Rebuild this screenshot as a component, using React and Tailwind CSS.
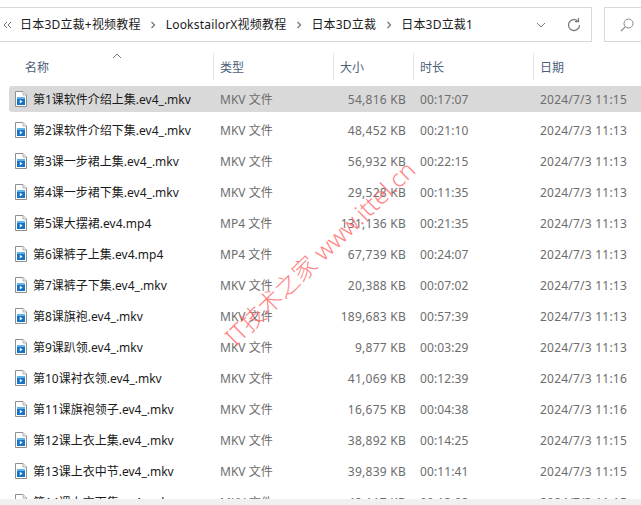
const font = { fontFamily: '"Noto Sans", "Noto Sans CJK SC", sans-serif' };

const rows = [
  ["第1课软件介绍上集.ev4_.mkv", "MKV 文件", "54,816 KB", "00:17:07", "2024/7/3 11:15"],
  ["第2课软件介绍下集.ev4_.mkv", "MKV 文件", "48,452 KB", "00:21:10", "2024/7/3 11:13"],
  ["第3课一步裙上集.ev4_.mkv", "MKV 文件", "56,932 KB", "00:22:15", "2024/7/3 11:13"],
  ["第4课一步裙下集.ev4_.mkv", "MKV 文件", "29,528 KB", "00:11:35", "2024/7/3 11:13"],
  ["第5课大摆裙.ev4.mp4", "MP4 文件", "131,136 KB", "00:21:35", "2024/7/3 11:13"],
  ["第6课裤子上集.ev4.mp4", "MP4 文件", "67,739 KB", "00:24:07", "2024/7/3 11:13"],
  ["第7课裤子下集.ev4_.mkv", "MKV 文件", "20,388 KB", "00:07:02", "2024/7/3 11:13"],
  ["第8课旗袍.ev4_.mkv", "MKV 文件", "189,683 KB", "00:57:39", "2024/7/3 11:13"],
  ["第9课趴领.ev4_.mkv", "MKV 文件", "9,877 KB", "00:03:29", "2024/7/3 11:13"],
  ["第10课衬衣领.ev4_.mkv", "MKV 文件", "41,069 KB", "00:12:39", "2024/7/3 11:16"],
  ["第11课旗袍领子.ev4_.mkv", "MKV 文件", "16,675 KB", "00:04:38", "2024/7/3 11:16"],
  ["第12课上衣上集.ev4_.mkv", "MKV 文件", "38,892 KB", "00:14:25", "2024/7/3 11:15"],
  ["第13课上衣中节.ev4_.mkv", "MKV 文件", "39,839 KB", "00:11:41", "2024/7/3 11:15"],
  ["第14课上衣下集.ev4_.mkv", "MKV 文件", "42,117 KB", "00:13:02", "2024/7/3 11:15"],
];

function Chevron() {
  return (
    <svg width="8" height="8" viewBox="0 0 8 8" className="mx-[8.5px] shrink-0">
      <path d="M2.5 1 L5.5 4 L2.5 7" fill="none" stroke="#777" strokeWidth="1.3" />
    </svg>
  );
}

function FileIcon() {
  return (
    <svg width="12" height="16" viewBox="0 0 12 16" className="shrink-0">
      <path d="M.5.5H8L11.5 4V15.5H.5Z" fill="#fff" stroke="#8f8f8f" />
      <path d="M8 .5V4H11.5" fill="#f0f0f0" stroke="#b0b0b0" />
      <rect x="2" y="6" width="8" height="8" fill="#1673c6" />
      <rect x="2" y="6" width="8" height="2" fill="#62b2ea" />
      <path d="M4.8 8.8 L7.6 10.6 L4.8 12.4Z" fill="#fff" />
    </svg>
  );
}

function Row({ r, selected }) {
  return (
    <div className={`flex h-[26px] mb-[5px] items-center text-[12px] shrink-0 ml-[9px] w-[632px] ${selected ? "bg-[#d9d9d9] rounded-l-[3px]" : ""}`}>
      <div className="w-[202px] flex items-center pl-[6px] shrink-0 text-[#1a1a1a]">
        <FileIcon />
        <span className="ml-[6px] pt-[2px] whitespace-nowrap">{r[0]}</span>
      </div>
      <div className="w-[120px] pl-[9px] pt-[2px] shrink-0 text-[#6d6d6d] whitespace-nowrap">{r[1]}</div>
      <div className="w-[75px] pt-[2px] text-right shrink-0 text-[#6d6d6d] whitespace-nowrap tracking-[0.25px]">{r[2]}</div>
      <div className="w-[120px] pl-[14px] pt-[2px] shrink-0 text-[#6d6d6d] whitespace-nowrap tracking-[0.1px]">{r[3]}</div>
      <div className="pl-[14px] pt-[2px] text-[#6d6d6d] whitespace-nowrap tracking-[0.22px]">{r[4]}</div>
    </div>
  );
}

function Head({ w, children, pl }) {
  return (
    <div className={`${w} ${pl} pt-[2px] h-[27px] flex items-center border-r border-[#e5e5e5] shrink-0 text-[12px] text-[#4c607a]`}>
      {children}
    </div>
  );
}

export default function App() {
  return (
    <div className="relative w-[641px] h-[505px] overflow-hidden bg-white flex flex-col" style={font}>
      <div className="flex pt-[7px] h-[53px] shrink-0">
        <div className="w-[592px] h-[35px] border-y border-r border-[#d9d9d9] flex items-center text-[12px] tracking-[0.2px] text-[#1a1a1a] whitespace-nowrap shrink-0">
          <svg width="9" height="8" viewBox="0 0 9 8" className="ml-[3px] mr-[8px] shrink-0">
            <path d="M4 1 L1 4 L4 7 M8 1 L5 4 L8 7" fill="none" stroke="#777" strokeWidth="1" />
          </svg>
          <span>日本3D立裁+视频教程</span>
          <Chevron />
          <span>LookstailorX视频教程</span>
          <Chevron />
          <span>日本3D立裁</span>
          <Chevron />
          <span>日本3D立裁1</span>
          <svg width="10" height="6" viewBox="0 0 10 6" className="ml-auto shrink-0">
            <path d="M1 1 L5 5 L9 1" fill="none" stroke="#777" strokeWidth="1" />
          </svg>
          <svg width="16" height="16" viewBox="0 0 16 16" className="ml-[20px] mr-[9px] shrink-0">
            <path d="M13.5 8 A5.5 5.5 0 1 1 11.5 3.8" fill="none" stroke="#777" strokeWidth="1.2" />
            <path d="M12.5 1 V4.6 H9" fill="none" stroke="#777" strokeWidth="1.2" />
          </svg>
        </div>
        <div className="ml-[12px] flex-1 h-[35px] border-y border-l border-[#d9d9d9] flex items-center pl-[15px]">
          <svg width="14" height="14" viewBox="0 0 14 14">
            <circle cx="8.5" cy="5.5" r="4.5" fill="none" stroke="#888" strokeWidth="1" />
            <path d="M5.2 8.8 L1 13" stroke="#888" strokeWidth="1.2" />
          </svg>
        </div>
      </div>

      <div className="relative flex h-[27px] shrink-0">
        <Head w="w-[214px]" pl="pl-[25px]">名称</Head>
        <Head w="w-[120px]" pl="pl-[6px]">类型</Head>
        <Head w="w-[80px]" pl="pl-[6px]">大小</Head>
        <Head w="w-[120px]" pl="pl-[6px]">时长</Head>
        <div className="pl-[6px] pt-[2px] h-[27px] flex items-center text-[12px] text-[#4c607a]">日期</div>
        <svg width="10" height="6" viewBox="0 0 10 6" className="absolute left-[112px] top-0">
          <path d="M1 5 L5 1 L9 5" fill="none" stroke="#777" strokeWidth="1" />
        </svg>
      </div>

      <div className="mt-[6px] flex-1 min-h-0 overflow-hidden flex flex-col">
        {rows.map((r, i) => (
          <Row key={i} r={r} selected={i === 0} />
        ))}
      </div>
      <div className="h-[6px] bg-[#f0f0f0] shrink-0" />

      <div className="absolute left-[170px] top-[238px] w-[300px] text-center text-[24px] leading-[30px] font-light text-[#ff7070] opacity-85 whitespace-nowrap -rotate-[44deg] pointer-events-none">
        IT技术之家 www.ittel.cn
      </div>
    </div>
  );
}
